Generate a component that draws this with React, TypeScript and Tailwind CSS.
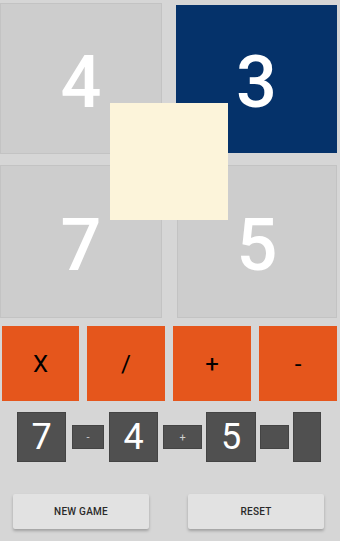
const font = { fontFamily: "Roboto, 'Liberation Sans', sans-serif" };

function Tile({ value, dark, className }: { value: string; dark?: boolean; className: string }) {
  return (
    <div
      className={`flex items-center justify-center pt-2 text-[72px] font-medium leading-none text-white ${
        dark ? "bg-[#05326a]" : "border border-[#c3c3c3] bg-[#cdcdcd]"
      } ${className}`}
    >
      {value}
    </div>
  );
}

function OpButton({ label, className }: { label: string; className: string }) {
  return (
    <div
      className={`flex h-[75px] items-center justify-center bg-[#e5561c] text-[24px] leading-none text-black ${className}`}
    >
      {label}
    </div>
  );
}

function Slot({ value, small, className }: { value?: string; small?: boolean; className: string }) {
  return (
    <div
      className={`flex items-center justify-center border border-[#444] bg-[#505050] leading-none ${
        small ? "h-[24px] text-[11px] text-[#cfcfcf]" : "h-[50px] text-[36px] text-white"
      } ${className}`}
    >
      {value}
    </div>
  );
}

export default function App() {
  return (
    <div className="h-[541px] w-[340px] overflow-hidden bg-[#d6d6d6]" style={font}>
      <div className="relative">
        <div className="flex items-start pt-[3px]">
          <Tile value="4" className="h-[151px] w-[162px]" />
          <Tile value="3" dark className="ml-[14px] mt-[2px] h-[148px] w-[161px]" />
        </div>
        <div className="mt-[11px] flex">
          <Tile value="7" className="h-[153px] w-[162px]" />
          <Tile value="5" className="ml-[15px] h-[153px] w-[160px]" />
        </div>
        <div className="absolute left-[110px] top-[103px] h-[117px] w-[118px] bg-[#fcf4da]" />
      </div>

      <div className="mt-[8px] flex pl-[2px]">
        <OpButton label="X" className="w-[77px]" />
        <OpButton label="/" className="ml-[8px] w-[78px]" />
        <OpButton label="+" className="ml-[8px] w-[78px]" />
        <OpButton label="-" className="ml-[8px] w-[78px]" />
      </div>

      <div className="mt-[11px] flex items-center pl-[17px]">
        <Slot value="7" className="w-[49px]" />
        <Slot value="-" small className="ml-[6px] w-[32px]" />
        <Slot value="4" className="ml-[5px] w-[49px]" />
        <Slot value="+" small className="ml-[5px] w-[39px]" />
        <Slot value="5" className="ml-[4px] w-[50px]" />
        <Slot small className="ml-[4px] w-[29px]" />
        <Slot className="ml-[4px] w-[28px]" />
      </div>

      <div className="mt-[32px] flex pl-[13px]">
        <button className="h-[35px] w-[136px] rounded-[2px] bg-[#e2e2e2] text-[10px] font-medium tracking-wide text-[#2a2a2a] shadow-[0_2px_3px_rgba(0,0,0,0.25)]">
          NEW GAME
        </button>
        <button className="ml-[39px] h-[35px] w-[136px] rounded-[2px] bg-[#e2e2e2] text-[10px] font-medium tracking-wide text-[#2a2a2a] shadow-[0_2px_3px_rgba(0,0,0,0.25)]">
          RESET
        </button>
      </div>
    </div>
  );
}
